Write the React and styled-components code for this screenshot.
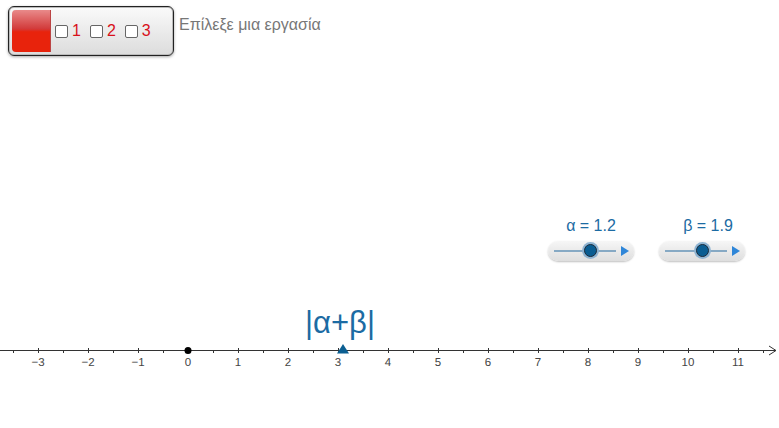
import styled, { createGlobalStyle } from "styled-components";

const Global = createGlobalStyle`
  html, body {
    margin: 0;
    padding: 0;
    background: #fff;
  }
  body {
    font-family: "Liberation Sans", Arial, sans-serif;
  }
`;

const BLUE = "#1c6ba3";

const Canvas = styled.div`
  position: relative;
  width: 779px;
  height: 428px;
  overflow: hidden;
  background: #fff;
`;

const Toolbar = styled.div`
  position: absolute;
  left: 8px;
  top: 6px;
  display: flex;
  align-items: center;
  gap: 5px;
`;

const ButtonBox = styled.div`
  display: flex;
  align-items: stretch;
  width: 158px;
  height: 42px;
  padding: 3px;
  border: 1px solid #222;
  border-radius: 6px;
  background: linear-gradient(#fafafa, #dcdcdc);
  box-shadow: 0 1px 3px rgba(0, 0, 0, 0.35), inset 0 0 0 1px #bbb;
`;

const RedPart = styled.div`
  width: 39px;
  border-radius: 4px 0 0 4px;
  background: linear-gradient(
    #e98a8a 0%,
    #d23a3a 45%,
    #e8230c 52%,
    #e8230c 100%
  );
  box-shadow: inset -1px 0 0 #b44;
`;

const Checks = styled.div`
  display: flex;
  align-items: center;
  gap: 9px;
  padding-left: 4px;
`;

const CheckItem = styled.label`
  display: flex;
  align-items: center;
  gap: 4px;
  font-size: 16px;
  color: #d8101a;
`;

const Box = styled.span`
  width: 11px;
  height: 11px;
  border: 1px solid #666;
  border-radius: 2px;
  background: #fff;
`;

const Caption = styled.span`
  font-size: 16px;
  color: #777;
  margin-top: -12px;
`;

const SliderWrap = styled.div`
  position: absolute;
  left: ${(p) => p.$x}px;
  top: 217px;
  display: flex;
  flex-direction: column;
  align-items: center;
  gap: 6px;
`;

const SliderLabel = styled.div`
  font-size: 16px;
  color: ${BLUE};
  margin-left: ${(p) => p.$shift}px;
`;

const SliderBody = styled.div`
  position: relative;
  width: 86px;
  height: 20px;
  border-radius: 10px;
  background: linear-gradient(#f6f6f6, #dedede);
  box-shadow: 0 1px 2px rgba(0, 0, 0, 0.25);
`;

const Track = styled.div`
  position: absolute;
  left: 6px;
  top: 9px;
  width: 62px;
  height: 2px;
  background: #86a9c4;
`;

const Knob = styled.div`
  position: absolute;
  top: 3px;
  width: 11px;
  height: 11px;
  border-radius: 50%;
  background: #0a5d92;
  border: 1px solid #1a2a3a;
  box-shadow: 0 0 0 2px #8fb4d2;
`;

const Play = styled.svg`
  position: absolute;
  right: 5px;
  top: 5px;
`;

const AbsLabel = styled.div`
  position: absolute;
  left: 305px;
  top: 305px;
  font-size: 31px;
  color: ${BLUE};
`;

const AxisSvg = styled.svg`
  position: absolute;
  left: 0;
  top: 330px;
`;

const Slider = ({ x, name, value, knob, shift }) => (
  <SliderWrap $x={x}>
    <SliderLabel $shift={shift}>
      {name} = {value}
    </SliderLabel>
    <SliderBody>
      <Track />
      <Knob style={{ left: knob - 6 }} />
      <Play width="8" height="10" viewBox="0 0 8 10">
        <path d="M0 0 L8 5 L0 10 Z" fill="#2f86d8" />
      </Play>
    </SliderBody>
  </SliderWrap>
);

const Axis = () => {
  const y = 20;
  const ox = 188;
  const unit = 50;
  const ticks = [];
  for (let i = -7; i <= 23; i++) {
    const x = ox + (i * unit) / 2;
    if (x < 2 || x > 770) continue;
    ticks.push(
      <line
        key={"t" + i}
        x1={x + 0.5}
        x2={x + 0.5}
        y1={i % 2 === 0 ? y - 2 : y}
        y2={y + 3}
        stroke="#333"
        strokeWidth="1"
      />
    );
  }
  const labels = [];
  for (let n = -3; n <= 11; n++) {
    labels.push(
      <text
        key={"l" + n}
        x={ox + n * unit}
        y={y + 16}
        textAnchor="middle"
        fontSize="11.5"
        fill="#444"
        fontFamily="Liberation Sans, Arial, sans-serif"
        style={{ textRendering: "geometricPrecision" }}
      >
        {n < 0 ? "\u2212" + -n : n}
      </text>
    );
  }
  const tx = ox + 3.1 * unit;
  return (
    <AxisSvg width="779" height="50" viewBox="0 0 779 50">
      <line x1="0" x2="776" y1={y + 0.5} y2={y + 0.5} stroke="#333" strokeWidth="1" />
      <path d={`M769 ${y - 4} L776 ${y + 0.5} L769 ${y + 5}`} fill="none" stroke="#333" strokeWidth="1" />
      {ticks}
      {labels}
      <circle cx={ox} cy={y + 0.5} r="3.5" fill="#000" />
      <path d={`M${tx - 6} ${y + 3.5} L${tx} ${y - 6} L${tx + 6} ${y + 3.5} Z`} fill="#0b5f92" />
    </AxisSvg>
  );
};

const App = () => {
  return (
    <>
      <Global />
      <Canvas>
        <Toolbar>
          <ButtonBox>
            <RedPart />
            <Checks>
              {[1, 2, 3].map((n) => (
                <CheckItem key={n}>
                  <Box />
                  {n}
                </CheckItem>
              ))}
            </Checks>
          </ButtonBox>
          <Caption>Επίλεξε μια εργασία</Caption>
        </Toolbar>

        <Slider x={548} name="α" value="1.2" knob={42} shift={0} />
        <Slider x={659} name="β" value="1.9" knob={43} shift={12} />

        <AbsLabel>|α+β|</AbsLabel>
        <Axis />
      </Canvas>
    </>
  );
};

export default App;
